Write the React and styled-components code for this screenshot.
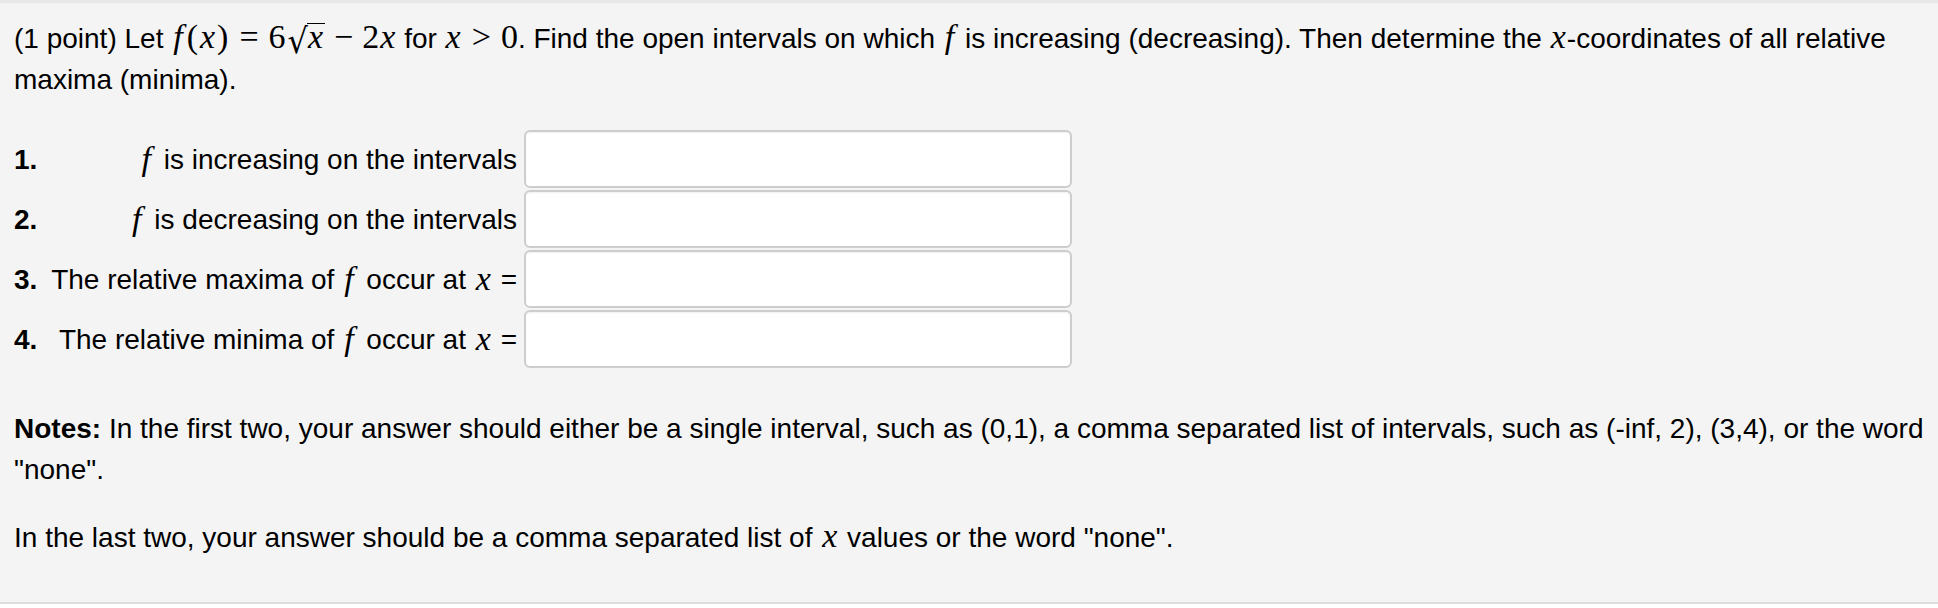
import React from 'react';
import styled, { createGlobalStyle } from 'styled-components';

const GlobalStyle = createGlobalStyle`
  body {
    margin: 0;
    background: #ffffff;
  }
`;

const Problem = styled.div`
  background: #f4f4f4;
  border-top: 3px solid #e7e7e7;
  border-bottom: 2px solid #dcdcdc;
  padding: 15px 4px 44px 14px;
  font-family: 'Liberation Sans', Arial, Helvetica, sans-serif;
  font-size: 28px;
  line-height: 41px;
  color: #000;
`;

const Para = styled.p`
  margin: ${(p) => p.$top || 0}px 0 0;
`;

// math glyphs are set a bit larger than the text, like MathJax does
const Var = styled.span`
  font-family: 'Liberation Serif', 'Times New Roman', serif;
  font-style: italic;
  font-size: 34px;
  line-height: 1;
  padding: 0 ${(p) => (p.$tight ? 1 : 2)}px;
`;

const F = styled(Var)`
  padding: 0 ${(p) => (p.$tight ? 3 : 5)}px 0 2px;
`;

const Num = styled.span`
  font-family: 'Liberation Serif', 'Times New Roman', serif;
  font-size: 34px;
  line-height: 1;
  padding: 0 ${(p) => p.$pad || 0}px;
`;

const Op = styled(Num)`
  margin: 0 ${(p) => p.$space || 10}px;
`;

const Sqrt = styled.span`
  display: inline-block;
  margin-left: 2px;
  white-space: nowrap;
`;

const Radical = styled.span`
  display: inline-block;
  font-family: 'DejaVu Serif', serif;
  font-size: 32px;
  line-height: 1;
  transform: translateY(4px) scaleY(1.08);
  margin-right: -1px;
`;

const Radicand = styled.span`
  display: inline-block;
  font-family: 'Liberation Serif', 'Times New Roman', serif;
  font-style: italic;
  font-size: 34px;
  line-height: 25px;
  border-top: 1.5px solid #000;
  padding: 0 2px 0 1px;
`;

const Answers = styled.div`
  display: grid;
  grid-template-columns: 32px 464px 548px;
  column-gap: 7px;
  margin-top: 29px;
`;

const Index = styled.b`
  display: flex;
  align-items: center;
  height: 60px;
`;

const Label = styled.span`
  display: flex;
  align-items: center;
  justify-content: flex-end;
  height: 60px;
  white-space: pre;
`;

const Field = styled.input`
  box-sizing: border-box;
  width: 548px;
  height: 58px;
  margin: 1px 0;
  background: #fff;
  border: 2px solid #cdcdcd;
  border-radius: 6px;
  box-shadow: inset 0 1px 2px rgba(0, 0, 0, 0.06);
  font: inherit;
  padding: 0 10px;
  outline: none;
`;

const rows = [
  { n: '1.', label: <><F>f</F> is increasing on the intervals</> },
  { n: '2.', label: <><F>f</F> is decreasing on the intervals</> },
  { n: '3.', label: <>The relative maxima of <F>f</F> occur at <Var>x</Var> =</> },
  { n: '4.', label: <>The relative minima of <F>f</F> occur at <Var>x</Var> =</> },
];

export default function App() {
  return (
    <>
      <GlobalStyle />
      <Problem>
        <Para>
          (1 point) Let <F $tight>f</F>
          <Num $pad={1}>(</Num>
          <Var $tight>x</Var>
          <Num $pad={1}>)</Num>
          <Op>=</Op>
          <Num>6</Num>
          <Sqrt>
            <Radical>√</Radical>
            <Radicand>x</Radicand>
          </Sqrt>
          <Op $space={9}>−</Op>
          <Num>2</Num>
          <Var $tight>x</Var> for <Var $tight>x</Var>
          <Op>&gt;</Op>
          <Num>0</Num>. Find the open intervals on which <F $tight>f</F> is increasing
          (decreasing). Then determine the <Var $tight>x</Var>-coordinates of all relative maxima (minima).
        </Para>
        <Answers>
          {rows.map((r) => (
            <React.Fragment key={r.n}>
              <Index>{r.n}</Index>
              <Label>{r.label}</Label>
              <Field type="text" />
            </React.Fragment>
          ))}
        </Answers>
        <Para $top={39}>
          <b>Notes:</b> In the first two, your answer should either be a single interval, such as
          (0,1), a comma separated list of intervals, such as (-inf, 2), (3,4), or the word "none".
        </Para>
        <Para $top={27}>
          In the last two, your answer should be a comma separated list of <Var>x</Var> values or
          the word "none".
        </Para>
      </Problem>
    </>
  );
}
